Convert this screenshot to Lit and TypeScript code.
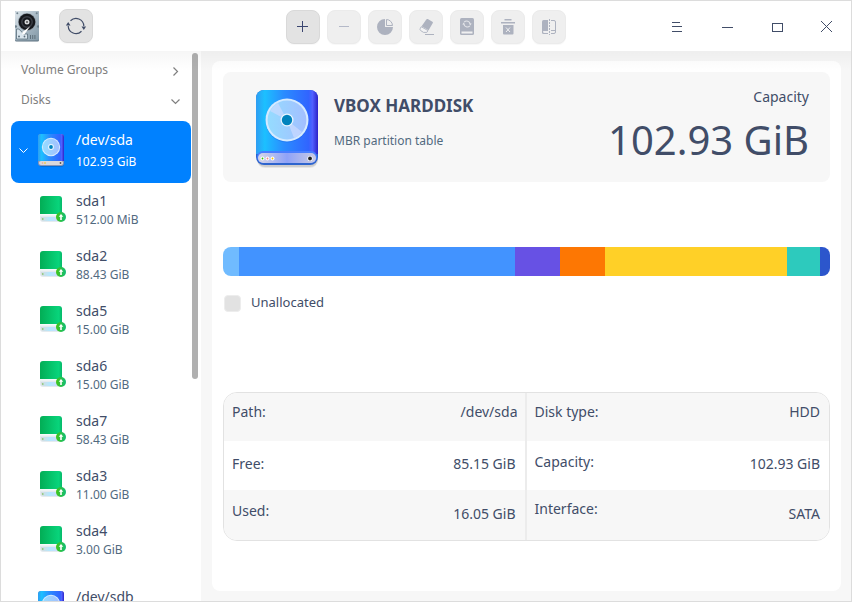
import { LitElement, html, css, svg } from "lit";
import { customElement, state } from "lit/decorators.js";
import { classMap } from "lit/directives/class-map.js";
import { styleMap } from "lit/directives/style-map.js";

interface Volume {
  name: string;
  size: string;
}

const partitions: Volume[] = [
  { name: "sda1", size: "512.00 MiB" },
  { name: "sda2", size: "88.43 GiB" },
  { name: "sda5", size: "15.00 GiB" },
  { name: "sda6", size: "15.00 GiB" },
  { name: "sda7", size: "58.43 GiB" },
  { name: "sda3", size: "11.00 GiB" },
  { name: "sda4", size: "3.00 GiB" },
];

// Relative widths of the segments in the usage bar.
const segments = [
  { share: 16, color: "#70bbff" },
  { share: 276, color: "#4293ff" },
  { share: 45, color: "#6751e4" },
  { share: 45, color: "#fd7703" },
  { share: 182, color: "#ffd027" },
  { share: 33, color: "#2dcabd" },
  { share: 10, color: "#2c56cc" },
];

const diskIcon = () => html`<svg viewBox="0 0 63 78" aria-hidden="true">
  <defs>
    <linearGradient id="disk-body">
      <stop offset="0" stop-color="#2f9df2" />
      <stop offset=".14" stop-color="#1cc0ff" />
      <stop offset=".45" stop-color="#2a8cff" />
      <stop offset=".85" stop-color="#3164ff" />
      <stop offset=".91" stop-color="#5161ff" />
      <stop offset="1" stop-color="#2c22c8" />
    </linearGradient>
    <linearGradient id="disk-plate">
      <stop offset="0" stop-color="#d6d6e6" />
      <stop offset=".5" stop-color="#8fa2f8" />
      <stop offset="1" stop-color="#c9cbe4" />
    </linearGradient>
    <linearGradient id="disk-platter">
      <stop offset="0" stop-color="#95dcff" />
      <stop offset="1" stop-color="#a3bfff" />
    </linearGradient>
  </defs>
  <rect x="1" y="4" width="61" height="74" rx="8" fill="#000" opacity=".07" />
  <rect x="1" y="3" width="61" height="74" rx="8" fill="#000" opacity=".1" />
  <rect width="62" height="75" rx="8" fill="#2d64ce" />
  <path d="M0 8a8 8 0 0 1 8-8h46a8 8 0 0 1 8 8v56H0Z" fill="url(#disk-body)" />
  <rect x="1" y="61" width="60" height="12" rx="6" fill="#477dff" />
  <rect x="2" y="63" width="58" height="10" rx="5" fill="url(#disk-plate)" />
  <circle cx="31" cy="31" r="21.5" fill="#1467e6" opacity=".4" />
  <circle cx="31" cy="30" r="21.5" fill="#d5eaff" />
  <circle cx="31" cy="30" r="19.4" fill="url(#disk-platter)" />
  <path d="M31 30 14 21a19.400 19.400 0 0 1 8-8ZM31 30l15 12a19.400 19.400 0 0 1-8 6Z" fill="#cfdcff" opacity=".65" />
  <circle cx="31" cy="30" r="6.500" fill="#e9f6ff" />
  <circle cx="31" cy="30" r="5.200" fill="#0083bd" />
  <g fill="#fff">
    <circle cx="6.500" cy="68.500" r="2" />
    <circle cx="11.500" cy="68.500" r="2" />
    <circle cx="16.500" cy="68.500" r="2" />
    <circle cx="54" cy="68.500" r="2.600" />
  </g>
  <circle cx="6.500" cy="68.500" r=".9" fill="#37c400" />
  <circle cx="11.500" cy="68.500" r=".9" fill="#f38585" />
  <circle cx="16.500" cy="68.500" r=".9" fill="#f5c400" />
  <circle cx="54" cy="68.500" r="1.900" fill="#222" />
</svg>`;

const smallDiskIcon = () => html`<svg viewBox="0 0 27 34" aria-hidden="true">
  <rect x="1" y="2" width="25" height="31" rx="3" fill="#000" opacity=".14" />
  <rect width="26" height="32" rx="3" fill="#8793b4" />
  <path d="M0 3a3 3 0 0 1 3-3h20a3 3 0 0 1 3 3v24H0Z" fill="url(#disk-body)" />
  <rect x="1" y="27" width="24" height="4" rx="2" fill="#d9d8dc" />
  <circle cx="13" cy="13" r="9.200" fill="#d5eaff" />
  <circle cx="13" cy="13" r="8.200" fill="url(#disk-platter)" />
  <circle cx="13" cy="13" r="2.900" fill="#e9f6ff" />
  <circle cx="13" cy="13" r="1.900" fill="#0083bd" />
  <circle cx="7" cy="29" r=".8" fill="#f5c400" />
  <circle cx="4.500" cy="29" r=".8" fill="#f3a585" />
  <circle cx="22.500" cy="29" r=".9" fill="#555" />
</svg>`;

const partitionIcon = () => html`<svg class="part-icon" viewBox="0 0 26 26" aria-hidden="true">
  <defs>
    <linearGradient id="part-body">
      <stop offset="0" stop-color="#02ad55" />
      <stop offset=".85" stop-color="#08d47b" />
      <stop offset="1" stop-color="#06b869" />
    </linearGradient>
    <linearGradient id="part-base">
      <stop offset="0" stop-color="#d8dcdd" />
      <stop offset=".45" stop-color="#b3e8ff" />
      <stop offset="1" stop-color="#dcd5ff" />
    </linearGradient>
    <linearGradient id="part-badge">
      <stop offset="0" stop-color="#43c517" />
      <stop offset="1" stop-color="#12bd78" />
    </linearGradient>
  </defs>
  <path d="M0 15h22v8a3 3 0 0 1-3 3H3a3 3 0 0 1-3-3Z" fill="#e4ebef" />
  <path d="M1 21h20v2a2 2 0 0 1-2 2H3a2 2 0 0 1-2-2Z" fill="url(#part-base)" />
  <path d="M0 3a3 3 0 0 1 3-3h16a3 3 0 0 1 3 3v15H0Z" fill="url(#part-body)" />
  <path d="M0 18h22v1.500H0Z" fill="#f7fbfb" />
  <circle cx="2.800" cy="23" r=".8" fill="#6dbf45" />
  <circle cx="21" cy="21" r="5" fill="url(#part-badge)" />
  <path d="M21 18l2.300 2.700h-1.500V24h-1.600v-3.300h-1.500Z" fill="#fff" />
</svg>`;

const appLogo = html`<svg class="logo" viewBox="0 0 24 31" role="img" aria-label="Disk Utility">
  <defs>
    <linearGradient id="logo-body" x2="1" y2="1">
      <stop offset="0" stop-color="#dfe7ec" />
      <stop offset=".5" stop-color="#a9bac6" />
      <stop offset="1" stop-color="#8298a6" />
    </linearGradient>
  </defs>
  <rect width="24" height="30.500" rx="1.500" fill="#5e7280" />
  <rect width="24" height="29.500" rx="1.500" fill="url(#logo-body)" />
  <g fill="#6f818d">
    <circle cx="2.300" cy="2.300" r="1" />
    <circle cx="21.700" cy="2.300" r="1" />
    <circle cx=".8" cy="15.500" r="1.300" />
    <circle cx="23.200" cy="15.500" r="1.300" />
  </g>
  <circle cx="12" cy="11" r="9" fill="#8a949d" />
  <circle cx="12" cy="11" r="8.300" fill="#15171c" />
  <circle cx="12" cy="11" r="5.200" fill="none" stroke="#3b3e46" stroke-width="1.500" />
  <circle cx="12" cy="11" r="2.500" fill="#d6d8da" />
  <circle cx="12" cy="11" r="1" fill="#555" />
  <path d="M1.500 18h2.300l3 3 1.700 2h4v5H1.500Z" fill="#dae6ee" stroke="#5c6e7b" stroke-width=".8" />
  <path d="M15.200 15.200 7.500 21l-.5 2.500 2.500-.2Z" fill="#fff" />
  <circle cx="4" cy="25.500" r="1" fill="#5c6e7b" />
  <circle cx="9.500" cy="25.500" r=".9" fill="#5c6e7b" />
  <path d="M15.500 24v4M17.700 24v4M19.900 24v4" stroke="#53636f" stroke-width=".8" />
</svg>`;

const tools = [
  {
    label: "Create partition",
    enabled: true,
    glyph: svg`<path d="M11 16.500h11M16.500 11v11" stroke="#3b4670" fill="none" />`,
  },
  {
    label: "Remove partition",
    enabled: false,
    glyph: svg`<path d="M12 16.500h10" stroke="#b4b9c8" fill="none" />`,
  },
  {
    label: "Partition",
    enabled: false,
    glyph: svg`<path d="M17 9a8 8 0 1 0 8 8h-8Z" fill="#adb2bf" /><path d="M18.500 9.500v6h6a6.200 6.200 0 0 0-6-6Z" fill="none" stroke="#adb2bf" />`,
  },
  {
    label: "Format",
    enabled: false,
    glyph: svg`<path d="M17.300 9.400q.6-.8 1.500-.3l4.600 2.600q.9.500.4 1.400l-4.200 7.200-7-4Z" fill="#adb2bf" /><path d="m12.200 16.700 6.800 3.900-1.200 1.800h-3.200l-2.800-1.700q-1.300-.8-.6-2Z" fill="#f3f3f4" stroke="#adb2bf" stroke-width=".9" /><path d="M16 24.500h9" stroke="#adb2bf" />`,
  },
  {
    label: "Wipe",
    enabled: false,
    glyph: svg`<rect x="10" y="8" width="14" height="17" rx="1.500" fill="#adb2bf" /><path d="M11.500 21.500h11v2h-11Z" fill="#f0f0f1" /><path d="M14.200 12.200a3.500 3.500 0 0 1 6 1.800M19.800 15.800a3.500 3.500 0 0 1-6-1.800" fill="none" stroke="#e4e5e9" stroke-width="1.100" /><path d="M12.300 14.500 13.700 12.500l1.400 2ZM18.900 13.500h2.800L20.300 15.500Z" fill="#e4e5e9" />`,
  },
  {
    label: "Unmount",
    enabled: false,
    glyph: svg`<path d="M13.500 9h7v1.500h-7ZM10 12h14v1.500H10ZM12 15h10.500v8.500q0 1-1 1H13q-1 0-1-1Z" fill="#adb2bf" /><path d="m15 17.500 4 4.500M19 17.500 15 22" stroke="#f0f0f1" fill="none" />`,
  },
  {
    label: "Resize",
    enabled: false,
    glyph: svg`<path d="M16 10v14h-4.500q-1.500 0-1.500-1.500v-11q0-1.500 1.500-1.500Z" fill="#adb2bf" /><path d="M11 21h5v2h-4.500Z" fill="#eeeef0" /><path d="M17.500 9v16" stroke="#adb2bf" stroke-dasharray="2 1" fill="none" /><path d="M19 10.500h3q1.500 0 1.500 1.500v10q0 1.500-1.500 1.500h-3M19 20.500h4.500" stroke="#adb2bf" fill="none" />`,
  },
];

const windowControls = [
  { label: "Menu", glyph: svg`<path d="M0 1.500h8M0 5.500h10M0 10.500h10" />` },
  { label: "Minimize", glyph: svg`<path d="M0 6.500h11" />` },
  { label: "Maximize", glyph: svg`<path d="M.5 2.500h10v8H.5Z" />` },
  { label: "Close", glyph: svg`<path d="m-1 0 11 11M10 0-1 11" />` },
];

const facts = [
  ["Path:", "/dev/sda", "Disk type:", "HDD"],
  ["Free:", "85.15 GiB", "Capacity:", "102.93 GiB"],
  ["Used:", "16.05 GiB", "Interface:", "SATA"],
];

@customElement("app-root")
export class AppRoot extends LitElement {
  @state() private selected = "/dev/sda";

  static styles = css`
    :host {
      display: flex;
      flex-direction: column;
      box-sizing: border-box;
      height: 100vh;
      border: 1px solid #dcdcdc;
      background: #f7f7f7;
      color: #414d68;
      font: 14px/20px "Noto Sans", sans-serif;
      overflow: hidden;
    }
    *, *::before, *::after { box-sizing: border-box; }
    button {
      margin: 0;
      padding: 0;
      border: 0;
      background: none;
      color: inherit;
      font: inherit;
      text-align: left;
    }
    svg { display: block; }

    .titlebar {
      position: relative;
      z-index: 1;
      display: grid;
      grid-template-columns: 1fr auto 1fr;
      align-items: center;
      flex: none;
      height: 50px;
      background: #fff;
    }
    .titlebar::after {
      content: "";
      position: absolute;
      inset: 100% 0 auto;
      height: 20px;
      background: linear-gradient(rgba(0, 0, 0, 0.035), rgba(0, 0, 0, 0));
      pointer-events: none;
    }
    .brand {
      display: flex;
      align-items: center;
      gap: 20px;
      padding-left: 14px;
    }
    .logo { width: 24px; height: 31px; }
    .tools { display: flex; gap: 7px; padding-top: 2px; }
    .tool {
      width: 34px;
      height: 34px;
      border: 1px solid #ebebeb;
      border-radius: 8px;
      background: #efefef;
      box-shadow: 0 1px 1px rgba(0, 0, 0, 0.03);
    }
    .tool.enabled { border-color: #d9d9d9; background: #e3e3e3; }
    .tool svg { width: 34px; height: 34px; margin: -1px; }
    .controls { display: flex; justify-content: flex-end; }
    .control {
      display: grid;
      place-items: center;
      width: 50px;
      height: 50px;
    }
    .control svg {
      width: 14px;
      height: 14px;
      fill: none;
      stroke: #414d68;
      shape-rendering: crispEdges;
    }

    .body { display: flex; flex: 1; min-height: 0; }
    .sidebar {
      position: relative;
      flex: none;
      width: 200px;
      padding: 4px 10px 0;
      background: #fff;
      overflow: hidden;
    }
    .thumb {
      position: absolute;
      top: 2px;
      right: 3px;
      width: 6px;
      height: 326px;
      border-radius: 3px;
      background: #b0b0b0;
    }
    .group {
      display: flex;
      align-items: center;
      justify-content: space-between;
      width: 100%;
      height: 30px;
      padding: 0 10px;
      color: #7f7f7f;
      font-size: 12px;
    }
    .chevron {
      width: 11px;
      height: 11px;
      fill: none;
      stroke: currentColor;
      stroke-width: 1.2;
    }
    .group .chevron { margin-top: 2px; }
    .tree { margin: 6px 0 0; padding: 0; list-style: none; }
    .tree li.next { margin-top: 10px; }
    .row {
      display: flex;
      align-items: center;
      width: 100%;
      height: 55px;
      padding-left: 29px;
      border-radius: 8px;
    }
    .row.disk { height: 62px; padding: 0 0 2px 7px; }
    .row.active { background: #0081ff; color: #fff; }
    .row.disk .chevron { flex: none; margin: 0 9px 2px 0; stroke-width: 1; }
    .disk-icon { flex: none; width: 27px; margin-right: 11px; }
    .disk-icon svg { width: 27px; height: 34px; }
    .part-icon { flex: none; width: 26px; height: 26px; margin: 0 10px 4px 0; }
    .name, .size { display: block; }
    .name { line-height: 18px; }
    .size { color: #526a7f; font-size: 12px; line-height: 20px; }
    .disk .name, .disk .size { min-height: 22px; line-height: 22px; }
    .active .size { color: #fff; }

    .main { flex: 1; min-width: 0; padding: 10px 10px 10px 11px; }
    .panel {
      height: 100%;
      padding: 11px;
      border-radius: 8px;
      background: #fff;
    }
    .summary {
      display: flex;
      height: 110px;
      padding: 14px 21px 0 33px;
      border-radius: 8px;
      background: #f7f7f7;
    }
    .summary .picture { flex: none; width: 63px; padding-top: 4px; }
    .summary .picture svg { width: 63px; height: 78px; }
    .heading { flex: 1; padding: 8px 0 0 15px; }
    .heading h1 { margin: 0; font-size: 17px; line-height: 24px; font-weight: 700; }
    .heading p { margin: 13px 0 0; color: #526a7f; font-size: 12px; }
    .capacity { text-align: right; }
    .capacity p { margin: 0; line-height: 22px; }
    .capacity .amount { padding-top: 6px; font-size: 40px; line-height: 52px; }
    .usage {
      display: flex;
      height: 29px;
      margin-top: 65px;
      border-radius: 8px;
      overflow: hidden;
    }
    .segment { flex: 1 1 0; }
    .legend {
      display: flex;
      align-items: center;
      gap: 10px;
      margin-top: 17px;
      padding-left: 1px;
      font-size: 13px;
      line-height: 18px;
    }
    .legend .label { padding-bottom: 2px; }
    .swatch {
      width: 17px;
      height: 17px;
      border: 1px solid #ededed;
      border-radius: 4px;
      background: #e2e2e2;
    }
    .facts {
      width: 100%;
      margin-top: 79px;
      border: 1px solid #e2e2e2;
      border-radius: 14px;
      border-spacing: 0;
      table-layout: fixed;
      overflow: hidden;
    }
    .facts tr { height: 49px; }
    .facts tr:first-child { height: 48px; }
    .facts tr:last-child { height: 50px; }
    .facts tr:nth-child(odd) { background: #f7f7f7; }
    .facts th, .facts td { padding: 0 8px 4px; }
    .facts th { font-weight: 400; text-align: left; }
    .facts td { padding-right: 9px; text-align: right; }
    .facts td.split { border-right: 2px solid #ececec; }
    .facts tr:first-child .split { padding-right: 7px; }
    .facts tr:first-child th, .facts tr:first-child td { padding-bottom: 10px; }
    .facts tr:not(:first-child) .second { padding-bottom: 8px; }
    .facts tr:last-child th { padding-bottom: 8px; }
    .facts tr:last-child .second { padding-bottom: 12px; }
    .facts tr:last-child td { padding-bottom: 2px; }
  `;

  private chevron(open: boolean) {
    return html`<svg class="chevron" viewBox="0 0 11 11" aria-hidden="true">
      <path d=${open ? "M1.500 3.500 5.500 7.500l4-4" : "M3.500 1.500l4 4-4 4"} />
    </svg>`;
  }

  private diskRow(name: string, size: string) {
    const active = this.selected === name;
    return html`<button
      class=${classMap({ row: true, disk: true, active })}
      @click=${() => (this.selected = name)}
    >
      ${this.chevron(true)}
      <span class="disk-icon">${smallDiskIcon()}</span>
      <span><span class="name">${name}</span><span class="size">${size}</span></span>
    </button>`;
  }

  private partitionRow(p: Volume) {
    return html`<li>
      <button
        class=${classMap({ row: true, active: this.selected === p.name })}
        @click=${() => (this.selected = p.name)}
      >
        ${partitionIcon()}
        <span><span class="name">${p.name}</span><span class="size">${p.size}</span></span>
      </button>
    </li>`;
  }

  render() {
    return html`
      <header class="titlebar">
        <div class="brand">
          ${appLogo}
          <button class="tool enabled" aria-label="Refresh">
            <svg viewBox="0 0 34 34" aria-hidden="true">
              <path
                d="M11.500 11.700a7.800 7.800 0 0 1 13.300 5.300M22.500 22.300A7.800 7.800 0 0 1 9.200 17"
                fill="none" stroke="#414d68" stroke-width="1.200"
              />
              <path d="M22.500 17.500h4.600L24.800 21ZM6.900 16.500h4.600L9.200 13Z" fill="#414d68" />
            </svg>
          </button>
        </div>
        <div class="tools" role="toolbar">
          ${tools.map(
            (t) => html`<button
              class=${classMap({ tool: true, enabled: t.enabled })}
              aria-label=${t.label}
              ?disabled=${!t.enabled}
            ><svg viewBox="0 0 34 34" aria-hidden="true">${t.glyph}</svg></button>`
          )}
        </div>
        <div class="controls">
          ${windowControls.map(
            (c) => html`<button class="control" aria-label=${c.label}>
              <svg viewBox="-3 -2 14 14" aria-hidden="true">${c.glyph}</svg>
            </button>`
          )}
        </div>
      </header>
      <div class="body">
        <nav class="sidebar">
          <button class="group">Volume Groups ${this.chevron(false)}</button>
          <button class="group">Disks ${this.chevron(true)}</button>
          <ul class="tree">
            <li>${this.diskRow("/dev/sda", "102.93 GiB")}</li>
            ${partitions.map((p) => this.partitionRow(p))}
            <li class="next">${this.diskRow("/dev/sdb", "")}</li>
          </ul>
          <div class="thumb"></div>
        </nav>
        <main class="main">
          <div class="panel">
            <section class="summary">
              <div class="picture">${diskIcon()}</div>
              <div class="heading">
                <h1>VBOX HARDDISK</h1>
                <p>MBR partition table</p>
              </div>
              <div class="capacity">
                <p>Capacity</p>
                <p class="amount">102.93 GiB</p>
              </div>
            </section>
            <div class="usage">
              ${segments.map(
                (s) => html`<div
                  class="segment"
                  style=${styleMap({ flexGrow: String(s.share), background: s.color })}
                ></div>`
              )}
            </div>
            <div class="legend">
              <span class="swatch"></span><span class="label">Unallocated</span>
            </div>
            <table class="facts">
              <tbody>
                ${facts.map(
                  ([a, av, b, bv]) => html`<tr>
                    <th scope="row">${a}</th>
                    <td class="split">${av}</td>
                    <th scope="row" class="second">${b}</th>
                    <td>${bv}</td>
                  </tr>`
                )}
              </tbody>
            </table>
          </div>
        </main>
      </div>
    `;
  }
}
